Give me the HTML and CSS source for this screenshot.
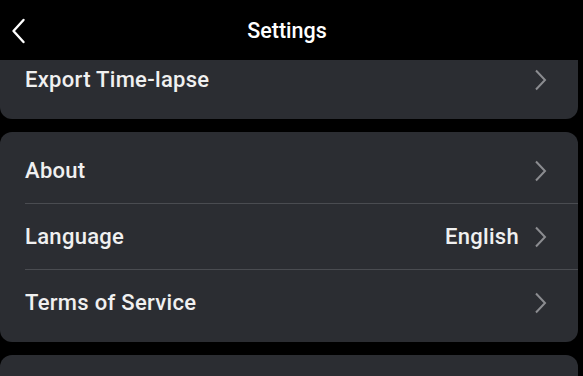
FILE: index.html
```html
<!DOCTYPE html>
<html>
<head>
<meta charset="utf-8">
<link rel="stylesheet" href="styles.css">
</head>
<body>
<div class="screen">
  <header class="topbar">
    <svg class="back" width="16" height="28" viewBox="0 0 16 28"><path d="M13.5 3 L3.5 14 L13.5 25" fill="none" stroke="#fff" stroke-width="2.4" stroke-linecap="round" stroke-linejoin="round"/></svg>
    <h1 class="title">Settings</h1>
  </header>
  <main class="scroll">
    <div class="list">
      <section class="card">
        <div class="row"><span class="label">Export Time-lapse</span><svg class="chev" width="13" height="22" viewBox="0 0 13 22"><path d="M2 1.5 L11 11 L2 20.5" fill="none" stroke="#8b8c90" stroke-width="2"/></svg></div>
      </section>
      <section class="card">
        <div class="row"><span class="label">About</span><svg class="chev" width="13" height="22" viewBox="0 0 13 22"><path d="M2 1.5 L11 11 L2 20.5" fill="none" stroke="#8b8c90" stroke-width="2"/></svg></div>
        <div class="row"><span class="label">Language</span><span class="value">English</span><svg class="chev" width="13" height="22" viewBox="0 0 13 22"><path d="M2 1.5 L11 11 L2 20.5" fill="none" stroke="#8b8c90" stroke-width="2"/></svg></div>
        <div class="row"><span class="label">Terms of Service</span><svg class="chev" width="13" height="22" viewBox="0 0 13 22"><path d="M2 1.5 L11 11 L2 20.5" fill="none" stroke="#8b8c90" stroke-width="2"/></svg></div>
      </section>
      <section class="card card-empty"></section>
    </div>
  </main>
</div>
</body>
</html>
```
FILE: styles.css
```css
html, body {
  margin: 0;
  padding: 0;
  background: #000;
}
.screen {
  width: 583px;
  height: 376px;
  overflow: hidden;
  display: flex;
  flex-direction: column;
  font-family: Roboto, "Liberation Sans", sans-serif;
  color: #f0f0f0;
}
.topbar {
  position: relative;
  z-index: 2;
  height: 60px;
  flex: none;
  background: #000;
  display: flex;
  align-items: center;
  justify-content: center;
}
.back {
  position: absolute;
  left: 10px;
  top: 17px;
}
.title {
  margin: 0;
  font-size: 21.5px;
  font-weight: 500;
  color: #fff;
  padding-right: 9px;
}
.scroll {
  flex: 1;
  overflow: hidden;
}
.list {
  margin-top: -19px;
  padding-right: 5px;
  display: flex;
  flex-direction: column;
  gap: 13px;
}
.card {
  background: #2b2d32;
  border-radius: 12px;
  padding: 6px 0 7px;
}
.card-empty {
  height: 60px;
}
.row {
  height: 65px;
  display: flex;
  align-items: center;
  margin-left: 25px;
  padding-right: 31px;
  font-size: 22px;
  font-weight: 500;
  letter-spacing: 0.3px;
}
.row + .row {
  border-top: 1px solid #4a4c51;
}
.label {
  flex: 1;
}
.value {
  margin-right: 15px;
}
.chev {
  flex: none;
}
```
